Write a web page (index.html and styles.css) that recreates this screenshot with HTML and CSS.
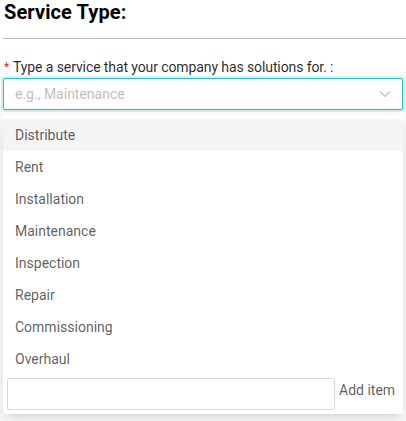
FILE: index.html
```html
<!DOCTYPE html>
<html lang="en">
<head>
    <meta charset="UTF-8">
    <title>Service Type</title>
    <link rel="stylesheet" href="styles.css">
</head>
<body>
    <div class="wrap">
        <h2 class="title">Service Type:</h2>
        <div class="divider"></div>
        <div class="field">
            <label class="label"><span class="req">*</span>Type a service that your company has solutions for. :</label>
            <div class="select">
                <span class="placeholder">e.g., Maintenance</span>
                <svg class="arrow" width="12" height="12" viewBox="0 0 12 12"><path d="M1 3.5 L6 8.5 L11 3.5" fill="none" stroke="#bfbfbf" stroke-width="1.1"/></svg>
            </div>
        </div>
        <div class="behind">
            <div class="behind-line"></div>
        </div>
        <div class="dropdown">
            <ul class="options">
                <li class="active">Distribute</li>
                <li>Rent</li>
                <li>Installation</li>
                <li>Maintenance</li>
                <li>Inspection</li>
                <li>Repair</li>
                <li>Commissioning</li>
                <li>Overhaul</li>
            </ul>
            <div class="add">
                <input class="add-input" type="text">
                <span class="add-btn">Add item</span>
            </div>
        </div>
    </div>
</body>
</html>
```

FILE: styles.css
```css
*{margin:0; padding:0; box-sizing:border-box;}
html, body{
    height: 100%;
    overflow: hidden;
}
body{
    font-family: Roboto, "Liberation Sans", sans-serif;
    background: #fff;
}
.wrap{
    position: relative;
    width: 406px;
    height: 421px;
    padding: 0 3px;
    overflow: hidden;
}
.title{
    font-size: 20px;
    font-weight: bold;
    color: #000;
    line-height: 24px;
    padding: 0 0 0 1px;
    height: 27px;
    letter-spacing: 0.1px;
}
.divider{
    height: 1px;
    background: #bbb;
    margin: 11px -3px 0 0;
}
.field{
    padding-top: 18px;
}
.label{
    display: block;
    font-size: 14px;
    color: rgba(0,0,0,.85);
    line-height: 20px;
    height: 21px;
    padding-left: 1px;
    letter-spacing: -0.1px;
}
.req{
    color: #f5222d;
    margin-right: 4px;
    font-size: 12px;
    vertical-align: 1px;
}
.select{
    display: flex;
    align-items: center;
    justify-content: space-between;
    height: 32px;
    border: 1px solid #37b9c4;
    border-radius: 2px;
    box-shadow: 0 0 0 2px rgba(55,185,196,.2);
    padding: 0 11px 0 11px;
}
.placeholder{
    font-size: 14px;
    color: #bfbfbf;
}
.behind{
    height: 200px;
}
.behind-line{
    margin-top: 95px;
    height: 1px;
    background: #ccc;
}
.dropdown{
    position: absolute;
    left: 3px;
    top: 115px;
    width: 400px;
    background: #fff;
    border-radius: 2px;
    box-shadow: 0 3px 6px -4px rgba(0,0,0,.12), 0 6px 16px 0 rgba(0,0,0,.08), 0 9px 28px 8px rgba(0,0,0,.05);
    padding: 4px 0;
}
.options{
    list-style: none;
}
.options li{
    height: 32px;
    line-height: 32px;
    padding: 0 12px;
    font-size: 14px;
    color: rgba(0,0,0,.65);
}
.options li.active{
    background: #f5f5f5;
}
.add{
    display: flex;
    align-items: flex-start;
    padding: 3px 4px 0 4px;
}
.add-input{
    width: 328px;
    height: 32px;
    border: 1px solid #d9d9d9;
    border-radius: 2px;
    outline: none;
}
.add-btn{
    margin-left: 4px;
    font-size: 14px;
    line-height: 24px;
    color: rgba(0,0,0,.65);
}
```
